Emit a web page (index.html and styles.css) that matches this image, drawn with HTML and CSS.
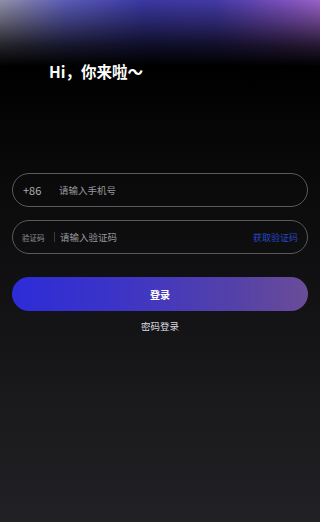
FILE: index.html
```html
<!DOCTYPE html>
<html lang="zh">
<head>
<meta charset="utf-8">
<link rel="stylesheet" href="styles.css">
</head>
<body>
<div class="page">
  <div class="hero">
    <h1 class="title">Hi，你来啦～</h1>
  </div>
  <form class="form">
    <div class="field">
      <span class="prefix">+86</span>
      <span class="placeholder">请输入手机号</span>
    </div>
    <div class="field">
      <span class="label">验证码</span>
      <span class="sep"></span>
      <span class="placeholder">请输入验证码</span>
      <span class="code">获取验证码</span>
    </div>
    <div class="btn">登录</div>
    <div class="alt">密码登录</div>
  </form>
</div>
</body>
</html>
```
FILE: styles.css
```css
html, body { margin: 0; padding: 0; }
body {
  width: 320px;
  height: 522px;
  overflow: hidden;
  font-family: "Noto Sans CJK SC", "Noto Sans", sans-serif;
  background: #000;
}
.page {
  height: 522px;
  background: linear-gradient(to bottom, #000 0px, #000 66px, #0a0a0b 180px, #121214 300px, #1b1b1e 420px, #212125 522px);
}
.hero {
  height: 173px;
  box-sizing: border-box;
  padding: 59px 0 0 49px;
  background:
    linear-gradient(to bottom, rgba(0,0,0,0) 0px, rgba(0,0,0,0.35) 22px, rgba(0,0,0,0.75) 45px, #000 66px, rgba(0,0,0,0) 66px),
    linear-gradient(to right, #9290a8 0%, #5c5cb8 20%, #3a38a2 45%, #443aa6 68%, #7a50bc 88%, #9a62c8 100%) top / 100% 66px no-repeat;
}
.title {
  margin: 0;
  color: #fff;
  font-size: 15.5px;
  font-weight: 700;
  line-height: 24px;
}
.form {
  padding: 0 12px;
  display: flex;
  flex-direction: column;
}
.field {
  height: 34px;
  box-sizing: border-box;
  border: 1px solid #5a5a5e;
  border-radius: 17px;
  display: flex;
  align-items: center;
  padding: 0 9px 0 10px;
  margin-bottom: 13px;
  font-size: 9.5px;
  color: #9a9a9e;
}
.prefix {
  width: 36px;
  font-size: 11px;
  color: #b0b0b4;
}
.placeholder {
  color: #97979b;
}
.label {
  font-size: 7.5px;
  color: #909094;
  width: 32px;
  margin-left: -1px;
}
.sep {
  width: 1px;
  height: 10px;
  background: #3a3a3e;
  margin-right: 5px;
}
.code {
  margin-left: auto;
  color: #2747c4;
  font-size: 9px;
}
.btn {
  margin-top: 10px;
  height: 34px;
  border-radius: 17px;
  background: linear-gradient(to right, #2c2cd8 0%, #3f35c4 40%, #5441a8 75%, #6a4c98 100%);
  color: #fff;
  font-size: 10px;
  font-weight: 700;
  display: flex;
  align-items: center;
  justify-content: center;
}
.alt {
  margin-top: 7px;
  text-align: center;
  color: #dcdce0;
  font-size: 9.5px;
  line-height: 16px;
}
```
